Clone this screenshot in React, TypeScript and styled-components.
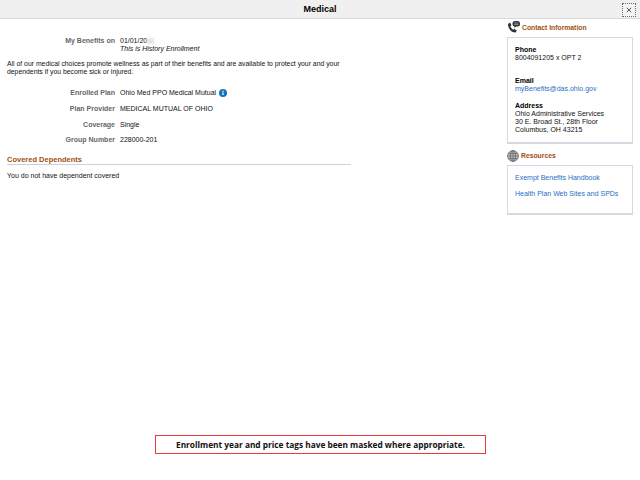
// App.tsx
import styled, { createGlobalStyle } from 'styled-components'

const GlobalStyle = createGlobalStyle`
  html, body {
    margin: 0;
    padding: 0;
    background: #fff;
    font-family: "Liberation Sans", Arial, sans-serif;
    font-size: 7px;
    color: #111;
  }
`

const Page = styled.div`
  position: relative;
  width: 640px;
  height: 480px;
  overflow: hidden;
`

const TitleBar = styled.header`
  position: relative;
  height: 18px;
  background: #f0f0f0;
  border-bottom: 1px solid #d8d8e2;
  display: flex;
  align-items: center;
  justify-content: center;
`

const Title = styled.h1`
  margin: 0;
  font-size: 9px;
  font-weight: bold;
  color: #000;
`

const CloseButton = styled.button`
  position: absolute;
  top: 3px;
  right: 4px;
  width: 14px;
  height: 14px;
  padding: 0;
  background: #f4f4f4;
  border: 1px dotted #666;
  display: flex;
  align-items: center;
  justify-content: center;
`

const Body = styled.div`
  display: flex;
  justify-content: space-between;
  padding: 0 7px;
`

const Main = styled.main`
  width: 344px;
  padding-top: 18px;
`

const Side = styled.aside`
  width: 126px;
  padding-top: 2px;
`

const Row = styled.div<{ $gap: number }>`
  display: flex;
  gap: 5px;
  margin-bottom: ${p => p.$gap}px;
  line-height: 8px;
`

const Label = styled.div`
  width: 108px;
  text-align: right;
  color: #666;
  font-weight: bold;
`

const Value = styled.div`
  display: flex;
  align-items: center;
  gap: 3px;
`

const DateBox = styled.div`
  display: flex;
  align-items: center;
`

const Mask = styled.span`
  width: 7px;
  height: 6px;
  background: #e4e4e4;
  filter: blur(1px);
`

const Note = styled.div`
  font-style: italic;
  line-height: 8px;
`

const Paragraph = styled.p`
  margin: 7px 0 14px;
  font-size: 6.85px;
  line-height: 7.5px;
`

const SectionTitle = styled.h2`
  margin: 11px 0 7px;
  font-size: 7.5px;
  line-height: 9px;
  font-weight: bold;
  color: #a1500f;
  border-bottom: 1px solid #d0d0dc;
`

const Plain = styled.div`
  line-height: 8px;
`

const PanelHead = styled.div`
  display: flex;
  align-items: center;
  gap: 2px;
  height: 13px;
  margin-bottom: 3px;
  font-size: 6.8px;
  font-weight: bold;
  color: #a1500f;
`

const Panel = styled.section<{ $height: number; $top: number }>`
  height: ${p => p.$height}px;
  box-sizing: border-box;
  border: 1px solid #d8d8e2;
  border-bottom-width: 2px;
  padding: ${p => p.$top}px 7px 0;
  margin-bottom: 5px;
`

const Block = styled.div<{ $gap: number }>`
  margin-bottom: ${p => p.$gap}px;
  line-height: 8px;
`

const BlockTitle = styled.div`
  font-weight: bold;
  color: #000;
  line-height: 9px;
`

const PanelLink = styled.a<{ $gap?: number }>`
  display: block;
  color: #1f6fc4;
  line-height: 8px;
  margin-bottom: ${p => p.$gap ?? 0}px;
`

const Banner = styled.div`
  position: absolute;
  left: 155px;
  top: 435px;
  width: 331px;
  height: 19px;
  box-sizing: border-box;
  border: 1px solid #e83a3a;
  display: flex;
  align-items: center;
  justify-content: center;
  font-family: "Open Sans", sans-serif;
  font-size: 8.3px;
  font-weight: bold;
  color: #111;
  background: #fff;
`

const PhoneIcon = () => (
  <svg width="13" height="13" viewBox="0 0 13 13">
    <path d="M1 3 3 1.600l1.500 2.700-1.100 1c.4 1.500 1.400 2.800 2.900 3.500l1-1 2.500 1.600-1.100 2C4.800 11.800.7 7.200 1 3Z" fill="#30353a" />
    <rect x="5.500" y="0" width="7.500" height="5.500" rx="2.500" fill="#30353a" />
    <path d="M7.500 4.800v2.200l2.200-2.200Z" fill="#30353a" />
    <path d="M7.200 2h4.200M7.200 3.500h4.200" stroke="#c8cacc" strokeWidth=".6" />
  </svg>
)

const GlobeIcon = () => (
  <svg width="12" height="12" viewBox="0 0 12 12" fill="none" stroke="#5f6468" strokeWidth=".8">
    <circle cx="6" cy="6" r="5.400" fill="#c4c6c8" />
    <ellipse cx="6" cy="6" rx="2.500" ry="5.400" />
    <path d="M6 .6v10.800M.6 6h10.800M1.300 3.400h9.400M1.300 8.600h9.400" />
  </svg>
)

const InfoIcon = () => (
  <svg width="8" height="8" viewBox="0 0 8 8">
    <circle cx="4" cy="4" r="4" fill="#1474bc" />
    <path d="M4 3.400v2.600" stroke="#fff" strokeWidth="1.200" />
    <circle cx="4" cy="2.200" r=".7" fill="#fff" />
  </svg>
)

const CloseIcon = () => (
  <svg width="6" height="6" viewBox="0 0 6 6">
    <path d="M.8.8l4.400 4.400M5.200.8.8 5.200" stroke="#555" strokeWidth="1" />
  </svg>
)

const App = () => (
  <Page>
    <GlobalStyle />
    <TitleBar>
      <Title>Medical</Title>
      <CloseButton aria-label="Close"><CloseIcon /></CloseButton>
    </TitleBar>
    <Body>
      <Main>
        <Row $gap={0}>
          <Label>My Benefits on</Label>
          <DateBox>01/01/20<Mask /></DateBox>
        </Row>
        <Row $gap={0}>
          <Label />
          <Note>This is History Enrollment</Note>
        </Row>
        <Paragraph>
          All of our medical choices promote wellness as part of their benefits and are available to protect your and your dependents if you become sick or injured.
        </Paragraph>
        <Row $gap={8}>
          <Label>Enrolled Plan</Label>
          <Value>Ohio Med PPO Medical Mutual <InfoIcon /></Value>
        </Row>
        <Row $gap={8}>
          <Label>Plan Provider</Label>
          <Value>MEDICAL MUTUAL OF OHIO</Value>
        </Row>
        <Row $gap={7}>
          <Label>Coverage</Label>
          <Value>Single</Value>
        </Row>
        <Row $gap={0}>
          <Label>Group Number</Label>
          <Value>228000-201</Value>
        </Row>
        <SectionTitle>Covered Dependents</SectionTitle>
        <Plain>You do not have dependent covered</Plain>
      </Main>
      <Side>
        <PanelHead><PhoneIcon />Contact Information</PanelHead>
        <Panel $height={107} $top={7}>
          <Block $gap={14}>
            <BlockTitle>Phone</BlockTitle>
            8004091205 x OPT 2
          </Block>
          <Block $gap={8}>
            <BlockTitle>Email</BlockTitle>
            <PanelLink>myBenefits@das.ohio.gov</PanelLink>
          </Block>
          <Block $gap={0}>
            <BlockTitle>Address</BlockTitle>
            Ohio Administrative Services<br />
            30 E. Broad St., 28th Floor<br />
            Columbus, OH 43215
          </Block>
        </Panel>
        <PanelHead><GlobeIcon />Resources</PanelHead>
        <Panel $height={50} $top={8}>
          <PanelLink $gap={8}>Exempt Benefits Handbook</PanelLink>
          <PanelLink>Health Plan Web Sites and SPDs</PanelLink>
        </Panel>
      </Side>
    </Body>
    <Banner>Enrollment year and price tags have been masked where appropriate.</Banner>
  </Page>
)

export default App
